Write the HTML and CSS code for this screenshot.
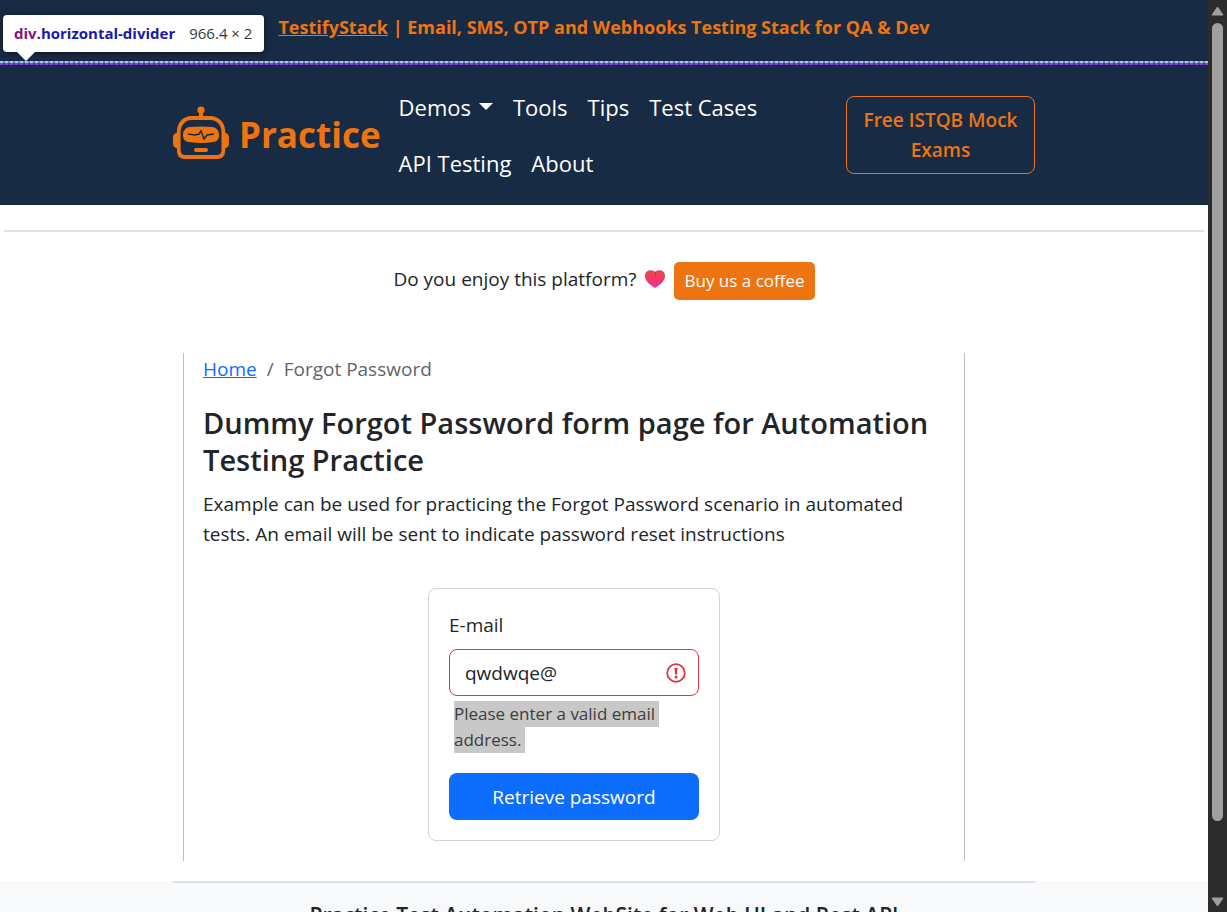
FILE: index.html
```html
<!DOCTYPE html>
<html lang="en">
<head>
<meta charset="utf-8">
<meta name="viewport" content="width=device-width, initial-scale=1">
<title>Forgot Password - Practice</title>
<link rel="stylesheet" href="styles.css">
</head>
<body>
<div class="window">
  <div class="page">
    <header class="header">
      <div class="banner"><a href="#">TestifyStack</a> | Email, SMS, OTP and Webhooks Testing Stack for QA &amp; Dev</div>
      <div class="horizontal-divider"></div>
      <nav class="navbar container">
        <a class="brand" href="#">
          <svg class="brand-icon" viewBox="0 0 56 54" aria-hidden="true">
            <g fill="none" stroke="#ee7411" stroke-width="4">
              <path d="M28 4v8"/>
              <path d="M18 12h20c8 0 14 6 14 14v18c0 5-3 7-7 7H11c-4 0-7-2-7-7V26c0-8 6-14 14-14z" transform="translate(2 0) scale(.93 1)"/>
            </g>
            <g fill="#ee7411">
              <circle cx="28" cy="4" r="3.600"/>
              <path d="M5 27H3Q0 28 0 32v5q0 4 3 5h2zM51 27h2q3 1 3 5v5q0 4-3 5h-2z"/>
              <path d="M16 21q12-1 24 0c4 1 6 4 6 8s-2 7-6 7q-12 2-24 0c-4 0-6-3-6-7s2-7 6-8z"/>
              <rect x="21" y="42" width="14" height="4" rx="2"/>
            </g>
            <path d="M15 28l7 1 4-1 2-3 3 8 3-4 7-1" fill="none" stroke="#182b44" stroke-width="1.500"/>
          </svg>
          <span>Practice</span>
        </a>
        <div class="nav-links">
          <button class="nav-link" type="button">Demos<span class="caret"></span></button>
          <a class="nav-link" href="#">Tools</a>
          <a class="nav-link" href="#">Tips</a>
          <a class="nav-link" href="#">Test Cases</a>
          <a class="nav-link" href="#">API Testing</a>
          <a class="nav-link" href="#">About</a>
        </div>
        <a class="exam-link" href="#">Free ISTQB Mock Exams</a>
      </nav>
      <div class="inspect-tip"><span class="tip-name"><span class="tip-tag">div</span>.horizontal-divider</span><span class="tip-size">966.4 × 2</span></div>
    </header>
    <hr class="rule">
    <div class="support">
      <span class="support-text">Do you enjoy this platform?</span>
      <svg class="heart" viewBox="0 0 20 18" aria-hidden="true">
        <defs><linearGradient id="heart-fill" x1="0" y1="0" x2="0" y2="1"><stop offset="0" stop-color="#f04a50"/><stop offset=".5" stop-color="#ee3b60"/><stop offset="1" stop-color="#f32ab5"/></linearGradient></defs>
        <path d="M10 2C12-.6 20-1 20 6c0 5-5 9-10 12C5 15 0 11 0 6c0-7 8-6.600 10-4z" fill="url(#heart-fill)"/>
        <path d="M10 2c1 2 1 3 0 5" fill="none" stroke="#c9274c" stroke-width="1"/>
      </svg>
      <a class="coffee" href="#">Buy us a coffee</a>
    </div>
    <div class="container">
      <main class="content">
        <nav class="breadcrumb" aria-label="Breadcrumb"><a href="#">Home</a><span>/</span><span>Forgot Password</span></nav>
        <h1>Dummy Forgot Password form page for Automation Testing Practice</h1>
        <p class="intro">Example can be used for practicing the Forgot Password scenario in automated tests. An email will be sent to indicate password reset instructions</p>
        <form class="card" novalidate>
          <label for="email">E-mail</label>
          <div class="field">
            <input id="email" type="email" value="qwdwqe@" aria-invalid="true" aria-describedby="email-error">
            <svg class="field-icon" viewBox="0 0 20 20" aria-hidden="true">
              <circle cx="10" cy="10" r="8.800" fill="none" stroke="#dc3545" stroke-width="1.800"/>
              <path d="M8.500 5h3l-.6 6.400h-1.800z" fill="#dc3545"/><circle cx="10" cy="14" r="1.500" fill="#dc3545"/>
            </svg>
          </div>
          <div class="feedback" id="email-error"><span>Please enter a valid email address.</span></div>
          <button class="submit" type="button">Retrieve password</button>
        </form>
      </main>
    </div>
    <footer class="footer">
      <div class="container footer-inner"><h2>Practice Test Automation WebSite for Web UI and Rest API</h2></div>
    </footer>
  </div>
  <div class="scrollbar" aria-hidden="true">
    <svg class="arrow" viewBox="0 0 13 10"><path d="M6.500 1L12 9H1z" fill="#9f9f9f" stroke="#9f9f9f" stroke-linejoin="round"/></svg>
    <div class="track"><div class="thumb"></div></div>
    <svg class="arrow" viewBox="0 0 13 10"><path d="M6.500 9L12 1H1z" fill="#9f9f9f" stroke="#9f9f9f" stroke-linejoin="round"/></svg>
  </div>
</div>
</body>
</html>
```
FILE: styles.css
```css
* { box-sizing: border-box; }
body {
  margin: 0;
  font: 19px/30px "Segoe UI", "Open Sans", "Noto Sans", sans-serif;
  color: #212529;
  background: #fff;
}
button, input { font: inherit; }
.window { display: flex; height: 100vh; overflow: hidden; }
.page { flex: 1; min-width: 0; overflow: hidden; }
.container { width: 100%; max-width: 862px; margin: 0 auto; }

.header { position: relative; background: #182b44; color: #ee7411; }
.banner { padding: 12px 20px 19px; text-align: center; font-size: 18px; font-weight: 700; }
.banner a { color: inherit; }
.horizontal-divider {
  height: 4px;
  background:
    repeating-linear-gradient(90deg, #a9c6e8 0 3px, #6c7fc0 3px 5px) top / 100% 2px no-repeat,
    repeating-linear-gradient(90deg, #8a3fe0 0 3px, #4a3494 3px 5px) bottom / 100% 2px no-repeat;
}
.navbar { display: flex; align-items: center; padding: 14px 0; }
.brand { display: flex; align-items: center; gap: 10px; color: inherit; font-size: 35px; font-weight: 700; text-decoration: none; }
.brand-icon { width: 56px; height: 54px; margin-bottom: 4px; }
.nav-links { display: flex; flex-wrap: wrap; flex: 1; padding-left: 8px; }
.nav-link { display: block; padding: 12px 10px; border: 0; background: none; color: #fff; font-size: 22px; line-height: 32px; text-decoration: none; }
.caret { display: inline-block; margin-left: 8px; vertical-align: 6px; border: 7px solid transparent; border-top-color: #fff; border-bottom: 0; }
.exam-link { width: 189px; padding: 8px 12px; border: 1px solid #ee7411; border-radius: 8px; color: inherit; font-weight: 600; text-align: center; text-decoration: none; }

.inspect-tip {
  position: absolute; left: 3px; top: 15px;
  display: flex; gap: 14px; padding: 8px 12px 8px 11px;
  border-radius: 4px; background: #fff; color: #303942;
  font-size: 15px; line-height: 21px;
  box-shadow: 0 1px 6px #0008;
}
.inspect-tip::after {
  content: ""; position: absolute; left: 14px; top: 100%;
  border: 9px solid transparent; border-top-color: #fff; border-bottom: 0;
}
.tip-name { font-weight: 700; color: #1a1aa6; }
.tip-tag { color: #881280; }

.rule { height: 2px; margin: 25px 4px 30px; border: 0; background: #dee2e6; }
.support { display: flex; justify-content: center; align-items: center; margin-bottom: 53px; }
.support-text { padding-bottom: 4px; }
.heart { width: 20px; height: 18px; margin: 0 9px 4px; }
.coffee { padding: 4px 10px; border-radius: 5px; background: #ee7411; color: #fff; font-size: 17px; text-decoration: none; }

.content { margin: 0 70px 20px 10px; padding: 1px 19px 20px; border: solid #bfbfbf; border-width: 0 1px; }
.breadcrumb { display: flex; gap: 10px; color: #5f656b; }
.breadcrumb a { color: #0d6efd; }
h1 { margin: 20px 0 11px; font-size: 29px; line-height: 37px; font-weight: 600; }
.intro { margin: 0 0 39px; }
.card { width: 292px; margin: 0 auto; padding: 21px 20px 20px; border: 1px solid #d3d3d3; border-radius: 8px; }
.card label { display: block; margin: 0 0 9px; }
.field { position: relative; }
.field input { display: block; width: 100%; height: 47px; padding: 0 45px 0 15px; border: 1px solid #dc3545; border-radius: 8px; background: #fff; color: #212529; }
.field-icon { position: absolute; right: 13px; top: 14px; width: 20px; height: 20px; }
.feedback { margin: 5px 5px 20px; font-size: 17px; line-height: 26px; color: #3d3d3d; }
.feedback span { padding: 1px 4px 2px 0; background: #c8c8c8; -webkit-box-decoration-break: clone; box-decoration-break: clone; }
.submit { display: block; width: 100%; height: 47px; padding: 0; border: 0; border-radius: 8px; background: #0d6efd; color: #fff; }

.footer { min-height: 100px; background: #f8f9fa; }
.footer-inner { border-top: 2px solid #dee2e6; }
h2 { margin: 0; padding-top: 17px; font-size: 21px; line-height: 30px; font-weight: 600; text-align: center; }

.scrollbar { display: flex; flex-direction: column; align-items: center; flex: 0 0 19px; padding: 6px 0 5px; background: #2c2c2c; }
.arrow { width: 13px; height: 10px; }
.track { flex: 1; width: 11px; padding: 7px 0; }
.thumb { height: 92%; border-radius: 6px; background: #9f9f9f; }
```
